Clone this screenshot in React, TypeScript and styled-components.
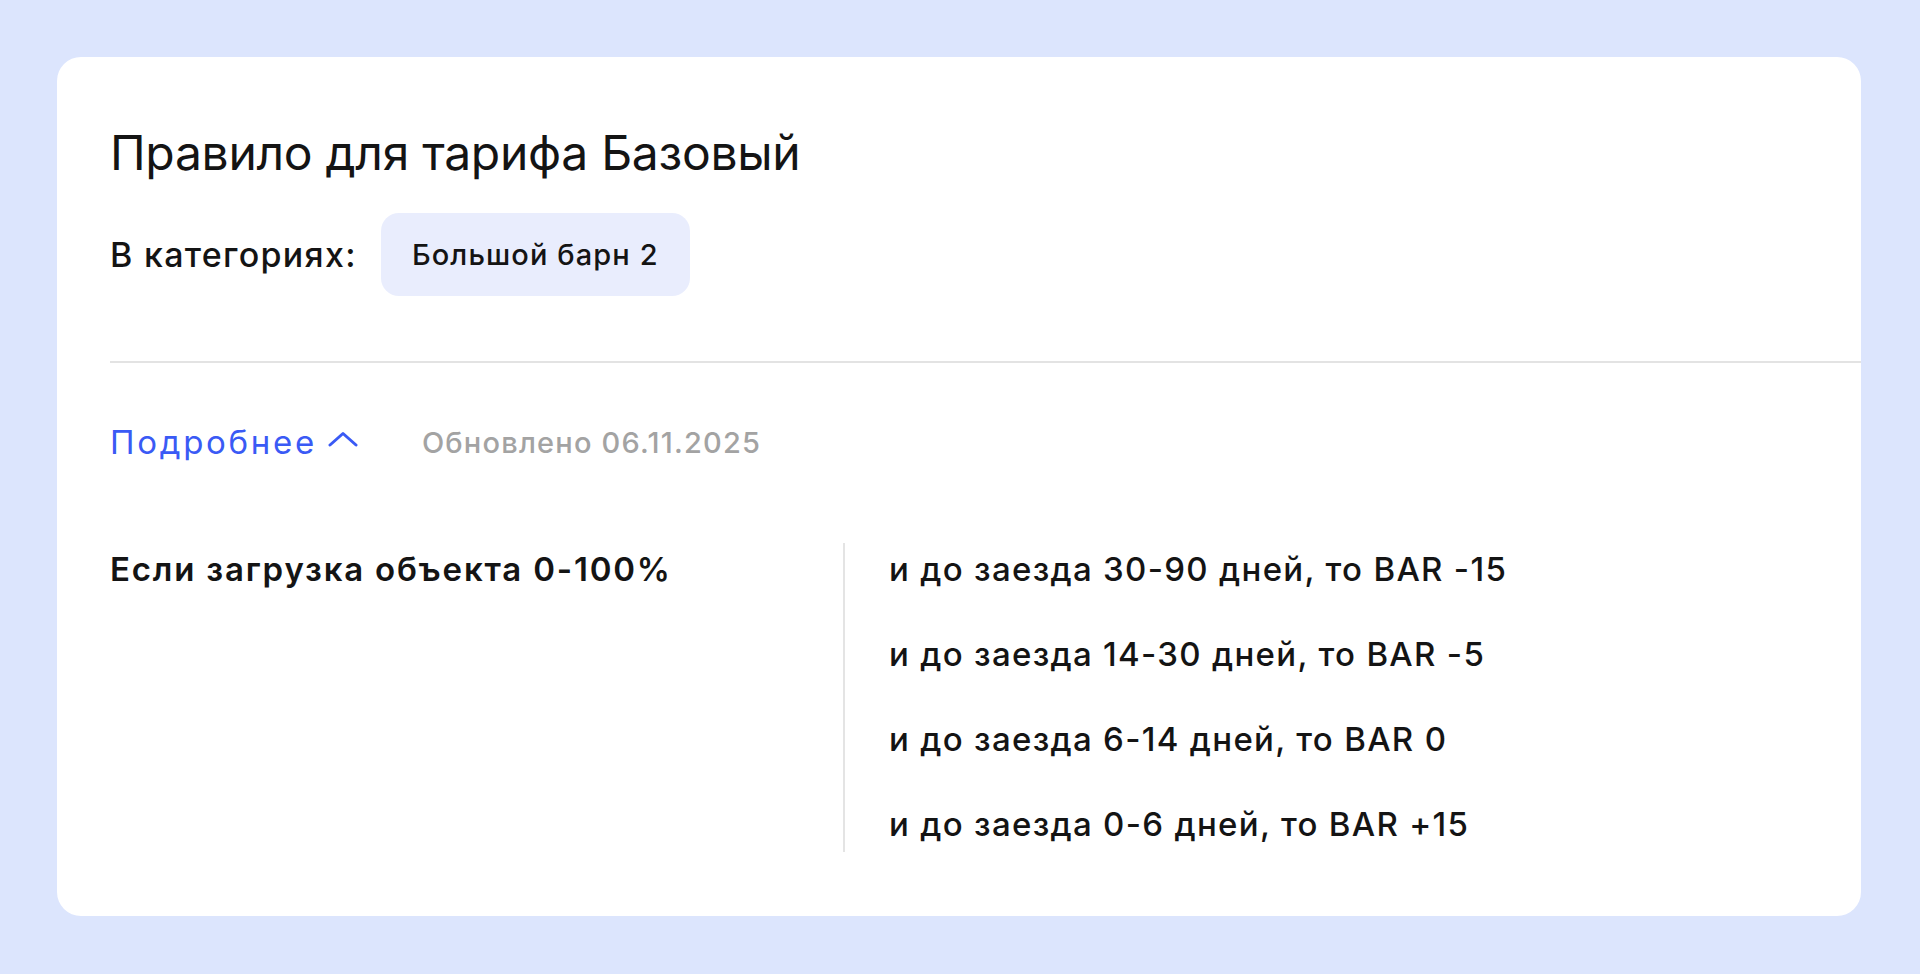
import * as React from "react"
import { createGlobalStyle, styled } from "styled-components"

const GlobalStyle = createGlobalStyle`
  html, body {
    margin: 0;
    padding: 0;
    background: #dce5fd;
  }
  body {
    font-family: Inter, "Noto Sans", sans-serif;
    color: #141414;
  }
`

const rules = [
  "и до заезда 30-90 дней, то BAR -15",
  "и до заезда 14-30 дней, то BAR -5",
  "и до заезда 6-14 дней, то BAR 0",
  "и до заезда 0-6 дней, то BAR +15",
]

export default function App() {
  return (
    <>
      <GlobalStyle />
      <Page>
        <Card>
          <Title>Правило для тарифа Базовый</Title>
          <CategoryRow>
            <CategoryLabel>В категориях:</CategoryLabel>
            <Chip>Большой барн 2</Chip>
          </CategoryRow>
          <Divider />
          <MetaRow>
            <MoreLink>
              Подробнее
              <svg width="30" height="16" viewBox="0 0 30 16" fill="none">
                <path
                  d="M2 14L15 2.5L28 14"
                  stroke="currentColor"
                  strokeWidth="3"
                  strokeLinecap="round"
                  strokeLinejoin="round"
                />
              </svg>
            </MoreLink>
            <Updated>Обновлено 06.11.2025</Updated>
          </MetaRow>
          <RuleGrid>
            <Condition>Если загрузка объекта 0-100%</Condition>
            <Outcomes>
              {rules.map((r, i) => (
                <Outcome key={i}>{r}</Outcome>
              ))}
            </Outcomes>
          </RuleGrid>
        </Card>
      </Page>
    </>
  )
}

const Page = styled.div`
  box-sizing: border-box;
  min-height: 974px;
  padding: 57px 59px 58px 57px;
`

const Card = styled.div`
  background: #ffffff;
  border-radius: 24px;
  padding: 68px 0 64px 53px;
  display: flex;
  flex-direction: column;
`

const Title = styled.h1`
  margin: 0;
  font-size: 48px;
  line-height: 56px;
  font-weight: 400;
  letter-spacing: -0.3px;
`

const CategoryRow = styled.div`
  display: flex;
  align-items: center;
  gap: 24px;
  margin-top: 32px;
`

const CategoryLabel = styled.span`
  font-size: 34px;
  font-weight: 500;
  letter-spacing: 1.3px;
`

const Chip = styled.span`
  display: inline-flex;
  align-items: center;
  height: 83px;
  box-sizing: border-box;
  padding: 0 31px;
  border-radius: 18px;
  background: #e9edfd;
  font-size: 29px;
  font-weight: 500;
  letter-spacing: 1.1px;
`

const Divider = styled.div`
  height: 2px;
  background: #e3e3e3;
  margin-top: 65px;
`

const MetaRow = styled.div`
  display: flex;
  align-items: center;
  gap: 64px;
  margin-top: 59px;
  height: 40px;
`

const MoreLink = styled.a`
  display: inline-flex;
  align-items: center;
  gap: 11px;
  color: #3a5af5;
  font-size: 33px;
  font-weight: 400;
  letter-spacing: 2.7px;
  cursor: pointer;

  svg {
    margin-top: -7px;
  }
`

const Updated = styled.span`
  color: #a3a3a3;
  font-size: 29px;
  font-weight: 500;
  letter-spacing: 1.2px;
`

const RuleGrid = styled.div`
  display: grid;
  grid-template-columns: 733px 1fr;
  margin-top: 81px;
`

const Condition = styled.div`
  padding-top: 6px;
  font-size: 33px;
  line-height: 40px;
  font-weight: 600;
  letter-spacing: 1.8px;
`

const Outcomes = styled.div`
  display: flex;
  flex-direction: column;
  gap: 45px;
  padding: 6px 0 8px 44px;
  border-left: 2px solid #e4e4e4;
`

const Outcome = styled.div`
  font-size: 33px;
  line-height: 40px;
  font-weight: 500;
  letter-spacing: 1.3px;
`
